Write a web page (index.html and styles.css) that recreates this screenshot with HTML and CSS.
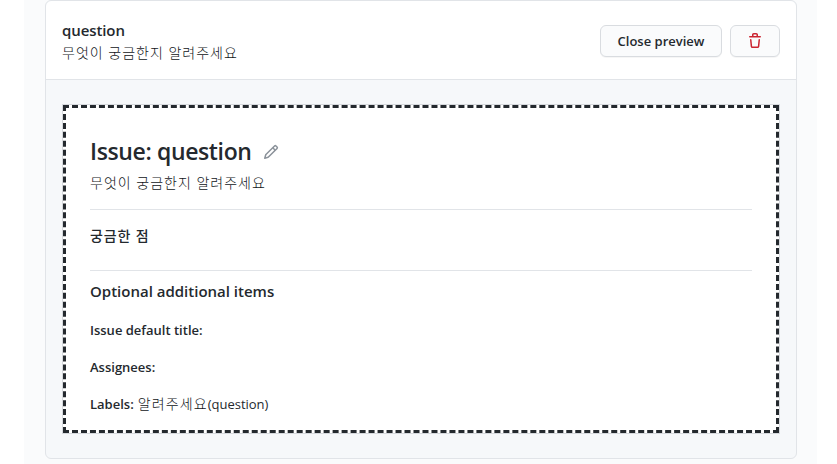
FILE: index.html
```html
<!DOCTYPE html>
<html lang="ko">
<head>
<meta charset="utf-8">
<title>Issue template</title>
<link rel="stylesheet" href="styles.css">
</head>
<body>
<main class="page">
  <section class="card">
    <header class="card-header">
      <div class="summary">
        <h3 class="name"><span>question</span></h3>
        <p class="about"><span>무엇이 궁금한지 알려주세요</span></p>
      </div>
      <button class="btn btn-preview" type="button"><span>Close preview</span></button>
      <button class="btn btn-delete" type="button" aria-label="Delete">
        <svg width="16" height="16" viewBox="0 0 16 16" fill="currentColor"><path fill-rule="evenodd" d="M6.5 1.75a.25.25 0 01.25-.25h2.5a.25.25 0 01.25.25V3h-3V1.75zm4.5 0V3h2.25a.75.75 0 010 1.5H2.75a.75.75 0 010-1.5H5V1.75C5 .784 5.784 0 6.75 0h2.5C10.216 0 11 .784 11 1.75zM4.496 6.675a.75.75 0 10-1.492.15l.66 6.6A1.75 1.75 0 005.405 15h5.19c.9 0 1.652-.681 1.741-1.576l.66-6.6a.75.75 0 00-1.492-.149l-.66 6.6a.25.25 0 01-.249.225h-5.19a.25.25 0 01-.249-.225l-.66-6.6z"/></svg>
      </button>
    </header>
    <div class="card-body">
      <article class="preview">
        <div class="title-row">
          <h1 class="title"><span>Issue: question</span></h1>
          <svg class="pencil" width="16" height="16" viewBox="0 0 16 16" fill="currentColor"><path fill-rule="evenodd" d="M11.013 1.427a1.75 1.75 0 012.474 0l1.086 1.086a1.75 1.75 0 010 2.474l-8.61 8.61c-.21.21-.47.364-.756.445l-3.251.93a.75.75 0 01-.927-.928l.929-3.25a1.75 1.75 0 01.445-.758l8.61-8.61zm1.414 1.06a.25.25 0 00-.354 0L10.811 3.75l1.439 1.44 1.263-1.263a.25.25 0 000-.354l-1.086-1.086zM11.189 6.25L9.75 4.81l-6.286 6.287a.25.25 0 00-.064.108l-.558 1.953 1.953-.558a.249.249 0 00.108-.064l6.286-6.286z"/></svg>
        </div>
        <p class="about preview-about"><span>무엇이 궁금한지 알려주세요</span></p>
        <h4 class="content"><span>궁금한 점</span></h4>
        <h3 class="optional"><span>Optional additional items</span></h3>
        <p class="field"><b>Issue default title:</b></p>
        <p class="field"><b>Assignees:</b></p>
        <p class="field"><b>Labels:</b><span class="label-ko">알려주세요</span><span>(question)</span></p>
      </article>
    </div>
  </section>
</main>
</body>
</html>
```
FILE: styles.css
```css
* { box-sizing: border-box; }
body {
  margin: 0;
  height: 464px;
  overflow: hidden;
  background: #fff;
  color: #24292e;
  font: 14px/21px "Open Sans", "Noto Sans CJK KR", sans-serif;
}
h1, h3, h4, p { margin: 0; font-weight: 600; white-space: nowrap; }
.page { width: 793px; height: 464px; margin-left: 24px; padding: 0 20px 0 21px; background: #fafbfc; }
.card { height: 459px; border: 1px solid #e1e4e8; border-radius: 6px; background: #f6f8fa; overflow: hidden; }
.card-header { display: flex; height: 79px; padding: 0 16px; border-bottom: 1px solid #e1e4e8; border-radius: 6px 6px 0 0; background: #fff; }
.summary { flex: 1; padding-top: 17px; }
.name { font-size: 15px; line-height: 24px; letter-spacing: -.1px; }
.about { font-weight: 300; line-height: 21px; font-size: 14px; letter-spacing: 1px; color: #101418; }
.btn { display: flex; align-items: center; justify-content: center; height: 32px; margin: 24px 0 0; padding: 0; border: 1px solid #d9dce0; border-radius: 6px; background: #fafbfc; box-shadow: 0 1px 0 rgba(27,31,35,.04); color: #24292e; font: 600 13px/20px "Open Sans", sans-serif; white-space: nowrap; }
.btn-preview { width: 122px; }
.btn-delete { width: 50px; margin-left: 8px; color: #cb2431; }
.card-body { padding: 25px 17px; }
.preview { height: 328px; padding: 26px 24px 0; border: 3px dashed #24292e; background: #fff; box-shadow: 0 0 0 1px #d6d9dd; }
.title-row { display: flex; align-items: center; height: 37px; }
.title { margin-top: -3px; font-size: 23px; line-height: 36px; letter-spacing: -.37px; }
.pencil { margin: -2px 0 0 11px; color: #8b929a; }
.preview-about { height: 39px; padding-top: 1px; border-bottom: 1px solid #e1e4e8; }
.content { height: 61px; padding-top: 15px; border-bottom: 1px solid #e1e4e8; font-size: 14px; font-weight: 500; line-height: 21px; letter-spacing: .85px; }
.optional { height: 49px; padding-top: 8px; font-size: 15px; line-height: 24px; }
.field { height: 37px; font-weight: 400; font-size: 13px; line-height: 21px; }
.field b { font-weight: 600; }
.field:last-child { margin-top: -1px; }
.label-ko { margin-left: 4px; font-weight: 300; font-size: 14px; letter-spacing: 1.1px; color: #101418; }
```
